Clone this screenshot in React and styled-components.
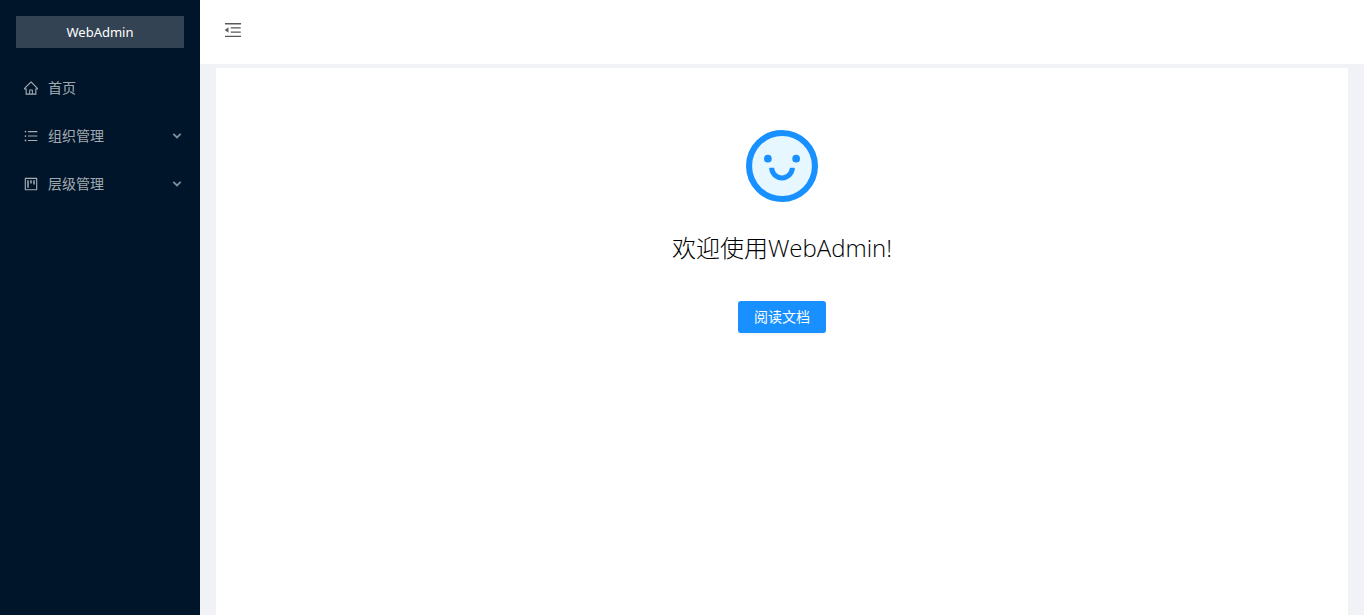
import React, { useState } from "react";
import styled, { createGlobalStyle } from "styled-components";
import {
  AiOutlineHome,
  AiOutlineUnorderedList,
  AiOutlineProject,
  AiOutlineMenuFold,
} from "react-icons/ai";

const GlobalStyle = createGlobalStyle`
  *, *::before, *::after { box-sizing: border-box; }
  body {
    margin: 0;
    font-family: "Noto Sans", "Noto Sans CJK SC", sans-serif;
    font-size: 14px;
    line-height: 22px;
    color: rgba(0, 0, 0, 0.85);
    background: #f0f2f5;
  }
`;

const Layout = styled.div`
  display: flex;
  min-height: 100vh;
`;

const Sider = styled.aside`
  flex: 0 0 200px;
  background: #001529;
`;

const Brand = styled.div`
  height: 32px;
  margin: 16px;
  font-size: 13px;
  line-height: 32px;
  text-align: center;
  color: #fff;
  background: rgba(255, 255, 255, 0.2);
`;

const Menu = styled.ul`
  display: flex;
  flex-direction: column;
  gap: 8px;
  margin: 0;
  padding: 4px 0;
  list-style: none;
`;

const itemStyles = `
  display: flex;
  align-items: center;
  gap: 10px;
  width: 100%;
  height: 40px;
  padding: 0 18px 0 24px;
  border: 0;
  background: none;
  font: inherit;
  color: rgba(255, 255, 255, 0.65);
  text-decoration: none;
  text-align: left;
  cursor: pointer;
  &:hover { color: #fff; }
`;

const MenuLink = styled.a`${itemStyles}`;
const MenuButton = styled.button`${itemStyles}`;

const Label = styled.span`
  flex: 1;
`;

const Main = styled.div`
  display: flex;
  flex: 1;
  flex-direction: column;
  min-width: 0;
`;

const Header = styled.header`
  display: flex;
  align-items: center;
  height: 64px;
  padding: 0 24px 4px;
  background: #fff;
`;

const FoldButton = styled.button`
  display: flex;
  padding: 0;
  border: 0;
  background: none;
  color: rgba(0, 0, 0, 0.65);
  cursor: pointer;
`;

const Content = styled.main`
  display: flex;
  flex: 1;
  flex-direction: column;
  align-items: center;
  margin: 4px 16px 0;
  padding: 62px 32px 48px;
  background: #fff;
`;

const Title = styled.h1`
  margin: 24px 0 32px;
  font-family: "Open Sans", "Noto Sans CJK SC", sans-serif;
  font-size: 24px;
  font-weight: 300;
  line-height: 43px;
  text-align: center;
  color: #000;
`;

const PrimaryLink = styled.a`
  height: 32px;
  padding: 0 16px;
  border-radius: 3px;
  line-height: 32px;
  color: #fff;
  background: #1890ff;
  box-shadow: 0 2px 0 rgba(0, 0, 0, 0.04);
  text-decoration: none;
`;

const ICON_BOX = "64 64 896 896";

function Chevron() {
  return (
    <svg width="10" height="10" viewBox="0 0 10 10" fill="none" stroke="currentColor" strokeOpacity="0.8" strokeWidth="1.8" aria-hidden="true">
      <path d="M1.300 2.900 5 6.400 8.700 2.900" />
    </svg>
  );
}

function Smile() {
  return (
    <svg width="72" height="72" viewBox={ICON_BOX} aria-hidden="true">
      <circle cx="512" cy="512" r="410" fill="#e6f7ff" stroke="#1890ff" strokeWidth="76" />
      <g fill="#1890ff">
        <circle cx="336" cy="421" r="48" />
        <circle cx="688" cy="421" r="48" />
        <path d="M512 693c-85.500 0-155.600-67.300-160-151.600a8 8 0 0 1 8-8.400h48.100c4.200 0 7.800 3.200 8.100 7.400C420 589.900 461.500 629 512 629s92.100-39.100 95.800-88.600c.3-4.200 3.900-7.400 8.100-7.400H664a8 8 0 0 1 8 8.400C667.600 625.700 597.500 693 512 693z" />
      </g>
    </svg>
  );
}

function SubMenu({ icon: Icon, title }) {
  const [open, setOpen] = useState(false);
  return (
    <li>
      <MenuButton type="button" aria-expanded={open} onClick={() => setOpen(!open)}>
        <Icon size={14} viewBox={ICON_BOX} aria-hidden="true" />
        <Label>{title}</Label>
        <Chevron />
      </MenuButton>
    </li>
  );
}

export default function App() {
  return (
    <>
      <GlobalStyle />
      <Layout>
        <Sider>
          <Brand>WebAdmin</Brand>
          <nav>
            <Menu>
              <li>
                <MenuLink href="#home">
                  <AiOutlineHome size={14} viewBox={ICON_BOX} aria-hidden="true" />
                  <Label>首页</Label>
                </MenuLink>
              </li>
              <SubMenu icon={AiOutlineUnorderedList} title="组织管理" />
              <SubMenu icon={AiOutlineProject} title="层级管理" />
            </Menu>
          </nav>
        </Sider>
        <Main>
          <Header>
            <FoldButton type="button" aria-label="收起菜单">
              <AiOutlineMenuFold size={18} viewBox={ICON_BOX} aria-hidden="true" />
            </FoldButton>
          </Header>
          <Content>
            <Smile />
            <Title>欢迎使用WebAdmin!</Title>
            <PrimaryLink href="#docs">阅读文档</PrimaryLink>
          </Content>
        </Main>
      </Layout>
    </>
  );
}
